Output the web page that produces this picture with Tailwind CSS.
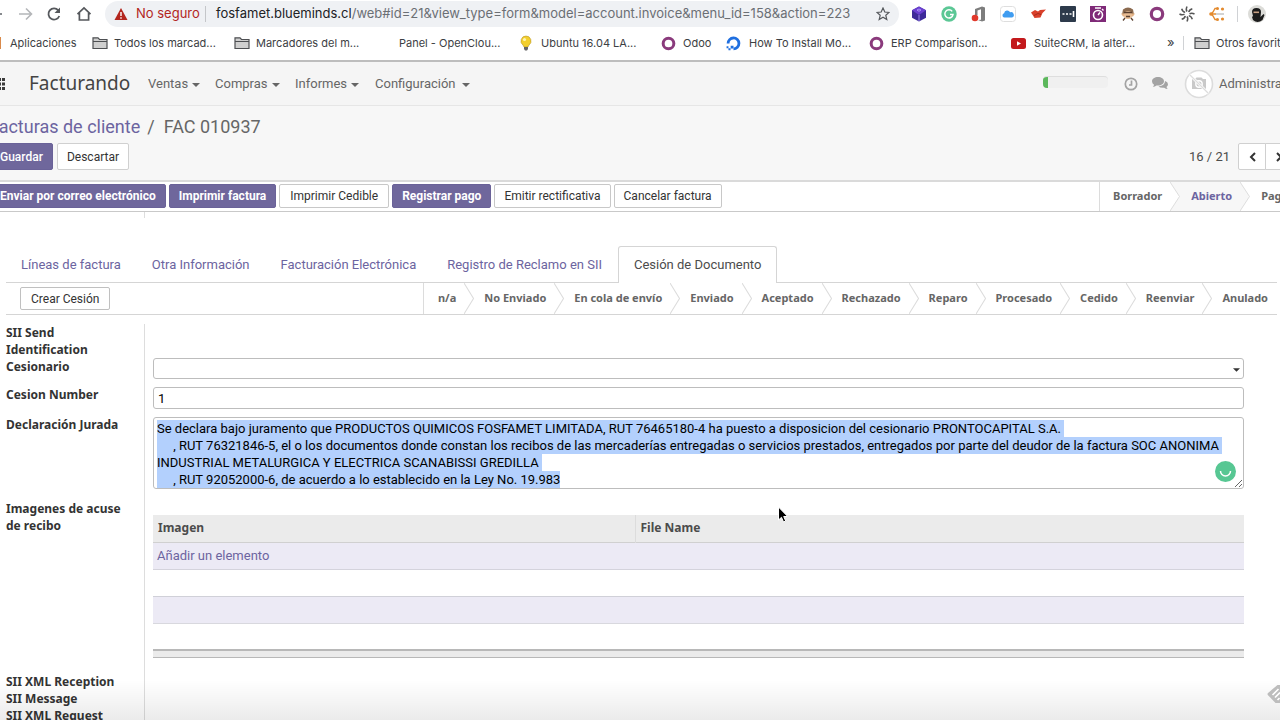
<!doctype html>
<html lang="es">
<head>
  <meta charset="utf-8">
  <meta name="viewport" content="width=device-width, initial-scale=1">
  <title>FAC 010937 - Facturando</title>
  <script src="https://cdn.jsdelivr.net/npm/@tailwindcss/browser@4"></script>
</head>

<body class="relative h-screen overflow-hidden bg-white font-['Roboto','Noto_Sans',sans-serif] text-[13px] text-[#4c4c4c]">
  <svg class="hidden">
    <symbol id="folder" viewBox="0 0 16 14">
      <path d="M1 12.5V1.8h5l1.5 1.700H15v9z" fill="#cfcfcf" stroke="#4d4f52" stroke-width="1.200"/>
      <path d="M1 5.500h14" stroke="#4d4f52" stroke-width="1"/>
    </symbol>
    <symbol id="ring" viewBox="0 0 16 16">
      <circle cx="8" cy="8" r="5.700" fill="none" stroke="#8a3a7c" stroke-width="3.200"/>
    </symbol>
    <symbol id="caret" viewBox="0 0 8 4">
      <path d="M0 0h8L4 4z" fill="#666"/>
    </symbol>
    <symbol id="chevron" viewBox="0 0 10 30" preserveAspectRatio="none">
      <path d="M0 0l9.500 15L0 30" fill="none" stroke="#dcdcdc"/>
    </symbol>
  </svg>

  <!-- browser toolbar -->
  <div class="flex h-7 items-center text-[#5f6368] font-['Inter',sans-serif]">
    <div class="flex w-[105px] shrink-0 items-center">
      <svg class="h-4 w-[18px]" viewBox="0 0 18 16"><path d="M0 8h2" stroke="#5f6368" stroke-width="1.600"/></svg>
      <svg class="size-4" viewBox="0 0 16 16" fill="none" stroke="#b4b6b9" stroke-width="1.600"><path d="M1 8h12M8 2.500L13.500 8 8 13.500"/></svg>
      <svg class="ml-3 size-4" viewBox="0 0 16 16" fill="none" stroke="#55585c" stroke-width="1.800"><path d="M13.300 10A5.600 5.600 0 1 1 12.300 4.300"/><path d="M14 1.500V7H8.500z" fill="#55585c" stroke="none"/></svg>
      <svg class="ml-[14px] size-4" viewBox="0 0 16 16" fill="none" stroke="#55585c" stroke-width="1.700"><path d="M1.500 8.200L8 2l6.500 6.200M3.400 7v7h9.200V7"/></svg>
    </div>
    <div class="flex h-[26px] flex-1 items-center rounded-full bg-[#eff1f4] px-[9px] text-[13px]">
      <svg class="size-[14px]" viewBox="0 0 14 14"><path d="M7 1l6.500 12H.5z" fill="#b3261e"/><path d="M7 5v4M7 10.200v1.500" stroke="#fff" stroke-width="1.400"/></svg>
      <span class="ml-2 w-[69px] whitespace-nowrap text-[#b3261e]">No seguro</span>
      <span class="mr-[10px] h-4 w-px bg-[#c4c6c9]"></span>
      <span class="flex-1 whitespace-nowrap text-[#6b6f74]"><span class="text-[#202124]">fosfamet.blueminds.cl</span>/web#id=21&amp;view_type=form&amp;model=account.invoice&amp;menu_id=158&amp;action=223</span>
      <svg class="size-[14px]" viewBox="0 0 14 14" fill="none" stroke="#55585c" stroke-width="1.200"><path d="M7 1l1.800 4 4.200.4-3.200 2.900 1 4.300L7 10.300l-3.800 2.300 1-4.300L1 5.400 5.200 5z"/></svg>
    </div>
    <div class="ml-3 flex w-[314px] shrink-0 items-center justify-between">
      <svg class="size-4" viewBox="0 0 16 16"><path d="M8 .5l7 3.800v7.400l-7 3.800-7-3.800V4.300z" fill="#3d2a99"/><path d="M8 .5l7 3.800L8 9 1 4.300z" fill="#6a3fd0"/><path d="M6 4l2-1 2 1-2 1.300zM8 9v6.500" stroke="#b9a4ff" fill="none" stroke-width=".8"/></svg>
      <svg class="size-4" viewBox="0 0 16 16"><circle cx="8" cy="8" r="7.700" fill="#5bc795"/><path d="M11.200 5.400A4.100 4.100 0 1 0 12 8.600H9" fill="none" stroke="#fff" stroke-width="1.500"/></svg>
      <svg class="size-4" viewBox="0 0 16 16"><path d="M4 3L11 .5l3 1v13l-3 1-4-1.500 3-.3V3.200L6.500 4.500V9L4 10z" fill="#7d7d7d"/><circle cx="4" cy="12" r="3.300" fill="#e0382b"/></svg>
      <svg class="size-4" viewBox="0 0 16 16"><rect x=".5" y=".5" width="15" height="15" rx="3" fill="#fff" stroke="#dedede"/><path d="M4.300 11.500a2.200 2.200 0 0 1-.2-4.300 3.200 3.200 0 0 1 6-.9 2.700 2.700 0 0 1 1.900 5.200z" fill="#3f9cf0"/></svg>
      <svg class="size-4" viewBox="0 0 16 16"><path d="M1 6.500L5 4l3 1.500L10 4l6-.5-3.500 3.500-2 4.500-6 .5L3 9.500z" fill="#d9402a"/><path d="M4 9.500l4-2 3 1" stroke="#a52a1a" fill="none"/></svg>
      <svg class="size-4" viewBox="0 0 16 16"><rect width="16" height="16" rx="1" fill="#2d3a4b"/><path d="M2.500 8h2M6 8h2M9.500 8h2M13.500 5v6" stroke="#fff" stroke-width="1.600"/></svg>
      <svg class="size-4" viewBox="0 0 16 16"><rect width="16" height="16" fill="#7f2a78"/><circle cx="8" cy="9" r="4.500" fill="none" stroke="#fff" stroke-width="1.600"/><path d="M5 2h6M8 9l2-2.500M12 3l1.500 1.500" stroke="#fff" stroke-width="1.400"/></svg>
      <svg class="size-4" viewBox="0 0 16 16"><path d="M3 3.500Q8-.5 13 3.500l1 5H2z" fill="#8b6a4f"/><path d="M1 7.500h14l-2 3H3z" fill="#e2b184"/><circle cx="8" cy="9" r="4" fill="#e8bd94"/><path d="M4 6.500h8M6 10.500h4M3 14.500l2-2.500M13 14.500L11 12" stroke="#5a4030" stroke-width="1.300"/></svg>
      <svg class="size-4"><use href="#ring"/></svg>
      <svg class="size-4" viewBox="0 0 16 16" stroke="#555" stroke-width="1.500" fill="none"><path d="M8 .5q-1.500 3 0 5M13.300 2.700q-3.200 1-3.500 3.500M15.500 8q-3-1.500-5 0M13.300 13.300q-1-3.200-3.500-3.500M8 15.500q1.500-3 0-5M2.700 13.300q3.200-1 3.500-3.500M.5 8q3 1.500 5 0M2.700 2.700q1 3.200 3.500 3.500"/></svg>
      <svg class="size-4" viewBox="0 0 16 16"><path d="M8 2.500H6L4 6 2 8l2 2 2 3.500h2M2 8h5" fill="none" stroke="#e38a2e" stroke-width="1.300"/><path d="M7 8h8" stroke="#bbb" stroke-width="1.300"/><g fill="#e38a2e"><circle cx="8.500" cy="2.500" r="1.500"/><circle cx="13.500" cy="3" r="1.600"/><circle cx="2" cy="8" r="1.800"/><circle cx="8.500" cy="13.500" r="1.500"/><circle cx="13.500" cy="13" r="1.600"/></g></svg>
    </div>
    <span class="ml-3 h-4 w-px shrink-0 bg-[#d0d2d5]"></span>
    <svg class="mr-[14px] ml-[10px] size-[18px] shrink-0" viewBox="0 0 18 18"><circle cx="9" cy="9" r="9" fill="#dcdcd8"/><path d="M4 7q0-4 4.500-4T13 7l-.5 5 3-3 1 1-2 5q-5 4-9.500 0l-1-3 1-1z" fill="#1c1c1c"/><path d="M5.500 6.500h5.500v1.600H5.500z" fill="#c9a184"/></svg>
  </div>

  <!-- bookmarks -->
  <div class="flex h-8 items-center pb-[2px] whitespace-nowrap text-[11px] text-[#3c4043] font-['Inter',sans-serif]">
    <a href="#" class="flex w-[92px] shrink-0 items-center gap-[9px]"><span class="h-3 w-px bg-[#d98a4b]"></span>Aplicaciones</a>
    <a href="#" class="flex w-[142px] shrink-0 items-center gap-[6px]"><svg class="h-[14px] w-4"><use href="#folder"/></svg>Todos los marcad...</a>
    <a href="#" class="flex w-[142px] shrink-0 items-center gap-[6px]"><svg class="h-[14px] w-4"><use href="#folder"/></svg>Marcadores del m...</a>
    <a href="#" class="flex w-[142px] shrink-0 items-center pl-[23px]">Panel - OpenClou...</a>
    <a href="#" class="flex w-[143px] shrink-0 items-center gap-[7px]"><svg class="size-4" viewBox="0 0 16 16"><path d="M8 1a5 5 0 0 1 3 9l-1 2H6l-1-2a5 5 0 0 1 3-9z" fill="#f3cf2c" stroke="#b9952a" stroke-width=".6"/><circle cx="6.500" cy="4.500" r="1.600" fill="#fdf3b4"/><path d="M6 12h4v2l-1 1.500H7L6 14z" fill="#666"/></svg>Ubuntu 16.04 LA...</a>
    <a href="#" class="flex w-[65px] shrink-0 items-center gap-[7px]"><svg class="size-[15px]" viewBox="0 0 16 16"><use href="#ring"/></svg>Odoo</a>
    <a href="#" class="flex w-[143px] shrink-0 items-center gap-2"><svg class="size-[15px]" viewBox="0 0 16 16"><path d="M8 13.700A5.800 5.800 0 1 0 2.200 8" fill="none" stroke="#1f6fe0" stroke-width="3"/><path d="M5 10.300h3v3H5zM2.600 13h2.200v2.200H2.600zM.6 11h2v2h-2z" fill="#1f6fe0"/></svg>How To Install Mo...</a>
    <a href="#" class="flex w-[142px] shrink-0 items-center gap-[7px]"><svg class="size-[15px]" viewBox="0 0 16 16"><use href="#ring"/></svg>ERP Comparison...</a>
    <a href="#" class="flex w-[142px] shrink-0 items-center gap-2"><svg class="h-[11px] w-[15px]" viewBox="0 0 15 11"><rect width="15" height="11" rx="2.500" fill="#c3191c"/><path d="M6 3.200v4.600L10 5.500z" fill="#fff"/></svg>SuiteCRM, la alter...</a>
    <button class="ml-[14px] w-4 shrink-0 text-left text-[13px]">»</button>
    <span class="h-[14px] w-px shrink-0 bg-[#d0d2d5]"></span>
    <a href="#" class="ml-[10px] flex shrink-0 items-center gap-[6px]"><svg class="h-[14px] w-4"><use href="#folder"/></svg>Otros favoritos</a>
  </div>

  <!-- main menu -->
  <nav class="flex h-[46px] items-center border-t-2 border-b border-t-[#bdbdbd] border-b-[#e6e6e6] bg-[#f5f5f5] whitespace-nowrap text-[#666]">
    <button class="w-[29px] shrink-0" aria-label="Aplicaciones"><svg class="h-[14px] w-[6px]" viewBox="0 0 6 14" fill="#3a3a3a"><path d="M0 1h1v3H0zM2 1h3v3H2zM0 5.500h1v3H0zM2 5.500h3v3H2zM0 10h1v3H0zM2 10h3v3H2z"/></svg></button>
    <a href="#" class="w-[119px] font-['Noto_Sans',sans-serif] text-[19px] text-[#444]">Facturando</a>
    <a href="#" class="flex w-[67px] items-center gap-1">Ventas<svg class="mt-[2px] h-1 w-2"><use href="#caret"/></svg></a>
    <a href="#" class="flex w-[80px] items-center gap-1">Compras<svg class="mt-[2px] h-1 w-2"><use href="#caret"/></svg></a>
    <a href="#" class="flex w-[80px] items-center gap-1">Informes<svg class="mt-[2px] h-1 w-2"><use href="#caret"/></svg></a>
    <a href="#" class="flex flex-1 items-center gap-[6px]">Configuración<svg class="mt-[2px] h-1 w-2"><use href="#caret"/></svg></a>
    <div class="mb-[3px] h-3 w-[65px] shrink-0 overflow-hidden rounded-sm border-t border-[#dedede] bg-[#f0f0f0]"><div class="h-3 w-[5px] bg-[#5cb85c]"></div></div>
    <svg class="ml-4 size-[14px] shrink-0" viewBox="0 0 14 14" fill="none" stroke="#a3a3a3" stroke-width="1.700"><circle cx="7" cy="7" r="5.700"/><path d="M7.500 3.500V8H5"/></svg>
    <svg class="ml-[14px] h-[13px] w-4 shrink-0" viewBox="0 0 16 13" fill="#a3a3a3"><path d="M6 0c3.300 0 6 1.800 6 4.200S9.300 8.500 6 8.500l-1.500-.1Q3 9.800.8 9.900q1-.9 1.200-2.200Q0 6.300 0 4.200C0 1.800 2.700 0 6 0z"/><path d="M13 4q3 1 3 3.200 0 1.700-1.500 2.800.3 1.200 1.200 2.100-2 0-3.500-1.400Q8 11 6.500 9.400 13 8.800 13 4z"/></svg>
    <svg class="ml-4 size-[30px] shrink-0" viewBox="0 0 30 30"><circle cx="15" cy="15" r="13.500" fill="#fff" stroke="#dcdcdc" stroke-width="1.600"/><path d="M8 10h3l1.500-1.500h5L19 10h3v10H8z" fill="#c9c9c9"/><circle cx="15" cy="15" r="3.200" fill="#c9c9c9" stroke="#fff" stroke-width="1.400"/><path d="M5.500 5.500l19 19" stroke="#fff" stroke-width="2.500"/><path d="M5.500 5.500l19 19" stroke="#dcdcdc" stroke-width="1.200"/></svg>
    <a href="#" class="ml-[5px] w-[61px] shrink-0">Administrator</a>
  </nav>

  <!-- breadcrumb and pager -->
  <div class="flex h-[76px] flex-col border-b-2 border-[#dadada] bg-[#f7f7f7]">
    <div class="-ml-[11px] flex h-[37px] items-center pt-1 text-[18px] whitespace-nowrap text-[#666]">
      <a href="#" class="text-[#6c64a0]">Facturas de cliente</a><span class="mx-[7px]">/</span><span class="ml-[2px]">FAC 010937</span>
    </div>
    <div class="flex items-center justify-between text-[12px]">
      <div class="-ml-[10px] flex gap-1">
        <button class="h-[27px] rounded-[2px] border border-[#6a6298] bg-[#6f679c] px-[9px] font-medium text-white">Guardar</button>
        <button class="h-[27px] rounded-[2px] border border-[#d0d0d0] bg-white px-[9px] text-[#333]">Descartar</button>
      </div>
      <div class="-mr-[13px] flex items-center">
        <span class="mr-[8px] text-[13px] text-[#4c4c4c]">16 / 21</span>
        <button class="flex h-[27px] w-7 items-center justify-center rounded-l-[2px] border border-[#d0d0d0] bg-white" aria-label="Anterior"><svg class="h-[10px] w-[7px]" viewBox="0 0 7 10"><path d="M6 1L2 5l4 4" fill="none" stroke="#333" stroke-width="2"/></svg></button>
        <button class="-ml-px flex h-[27px] w-7 items-center justify-center rounded-r-[2px] border border-[#d0d0d0] bg-white" aria-label="Siguiente"><svg class="h-[10px] w-[7px]" viewBox="0 0 7 10"><path d="M1 1l4 4-4 4" fill="none" stroke="#333" stroke-width="2"/></svg></button>
      </div>
    </div>
  </div>

  <!-- invoice actions and state -->
  <div class="flex h-[30px] items-stretch justify-between border-b border-[#c9c9c9] text-[12px] whitespace-nowrap">
    <div class="-ml-[10px] flex gap-[3px] py-[2px]">
      <button class="h-6 rounded-[2px] border border-[#6a6298] bg-[#6f679c] px-[9px] font-bold text-white">Enviar por correo electrónico</button>
      <button class="h-6 rounded-[2px] border border-[#6a6298] bg-[#6f679c] px-[9px] font-bold text-white">Imprimir factura</button>
      <button class="h-6 rounded-[2px] border border-[#c8c8c8] bg-white px-[10px] text-[#333]">Imprimir Cedible</button>
      <button class="h-6 rounded-[2px] border border-[#6a6298] bg-[#6f679c] px-[9px] font-bold text-white">Registrar pago</button>
      <button class="h-6 rounded-[2px] border border-[#c8c8c8] bg-white px-[9px] text-[#333]">Emitir rectificativa</button>
      <button class="h-6 rounded-[2px] border border-[#c8c8c8] bg-white px-[9px] text-[#333]">Cancelar factura</button>
    </div>
    <div class="-mr-[30px] flex items-center border-l border-[#dcdcdc] pl-[13px] font-['Noto_Sans',sans-serif] text-[11px] font-bold text-[#666]">
      <span>Borrador</span>
      <svg class="ml-2 h-[29px] w-[10px]" viewBox="0 0 10 30" preserveAspectRatio="none"><path d="M0 0h10v30H0l9.500-15z" fill="#f7f7f7"/><path d="M0 0l9.500 15L0 30" fill="none" stroke="#dcdcdc"/></svg>
      <span class="flex h-full items-center bg-[#f7f7f7] pr-2 pl-[11px] text-[#6c64a0]">Abierto</span>
      <svg class="h-[29px] w-[10px]" viewBox="0 0 10 30" preserveAspectRatio="none"><path d="M0 0l9.500 15L0 30" fill="#f7f7f7" stroke="#dcdcdc"/></svg>
      <span class="pr-2 pl-[11px]">Pagado</span>
    </div>
  </div>

  <div class="ml-[144px] h-[6px] w-px bg-[#ddd]"></div>

  <main>
    <!-- notebook tabs -->
    <div class="mr-[3px] ml-[6px] flex h-[65px] items-end gap-px border-b border-[#d5d5d5] text-[#6c64a0]">
      <a href="#" class="flex h-[35px] items-center px-[15px]">Líneas de factura</a>
      <a href="#" class="flex h-[35px] items-center px-[15px]">Otra Información</a>
      <a href="#" class="flex h-[35px] items-center px-[15px]">Facturación Electrónica</a>
      <a href="#" class="flex h-[35px] items-center px-[15px]">Registro de Reclamo en SII</a>
      <a href="#" class="-mb-px flex h-[37px] items-center rounded-t-[3px] border border-b-0 border-[#d5d5d5] bg-white px-[15px] text-[#4c4c4c]">Cesión de Documento</a>
    </div>

    <div class="mr-[3px] ml-[6px] flex h-8 items-center justify-between border-b border-[#d5d5d5] whitespace-nowrap">
      <button class="ml-[14px] h-[23px] rounded-[2px] border border-[#c0c0c0] bg-white px-[10px] text-[12px] text-[#333]">Crear Cesión</button>
      <div class="flex h-full items-center border-l border-[#dcdcdc] pr-[9px] pl-[14px] font-['Noto_Sans',sans-serif] text-[11px] font-bold text-[#666]">
        <span>n/a</span><svg class="mr-[10px] ml-2 h-[31px] w-[10px]"><use href="#chevron"/></svg>
        <span>No Enviado</span><svg class="mr-[10px] ml-2 h-[31px] w-[10px]"><use href="#chevron"/></svg>
        <span>En cola de envío</span><svg class="mr-[10px] ml-2 h-[31px] w-[10px]"><use href="#chevron"/></svg>
        <span>Enviado</span><svg class="mr-[10px] ml-2 h-[31px] w-[10px]"><use href="#chevron"/></svg>
        <span>Aceptado</span><svg class="mr-[10px] ml-2 h-[31px] w-[10px]"><use href="#chevron"/></svg>
        <span>Rechazado</span><svg class="mr-[10px] ml-2 h-[31px] w-[10px]"><use href="#chevron"/></svg>
        <span>Reparo</span><svg class="mr-[10px] ml-2 h-[31px] w-[10px]"><use href="#chevron"/></svg>
        <span>Procesado</span><svg class="mr-[10px] ml-2 h-[31px] w-[10px]"><use href="#chevron"/></svg>
        <span>Cedido</span><svg class="mr-[10px] ml-2 h-[31px] w-[10px]"><use href="#chevron"/></svg>
        <span>Reenviar</span><svg class="mr-[10px] ml-2 h-[31px] w-[10px]"><use href="#chevron"/></svg>
        <span>Anulado</span>
      </div>
    </div>

    <!-- form fields -->
    <div class="mt-[9px] mr-9 ml-[6px] flex flex-col">
      <div class="flex">
        <div class="w-[139px] shrink-0 border-r border-[#ddd] pr-10 font-['Noto_Sans',sans-serif] text-[12px] leading-[17px] font-bold text-[#333]">SII Send Identification</div>
      </div>
      <div class="flex h-7">
        <label for="cesionario" class="w-[139px] shrink-0 border-r border-[#ddd] font-['Noto_Sans',sans-serif] text-[12px] leading-[17px] font-bold text-[#333]">Cesionario</label>
        <div class="relative ml-2 flex-1">
          <select id="cesionario" class="block h-[21px] w-full appearance-none rounded-[3px] border border-[#bdbdbd] bg-white px-1"><option></option></select>
          <svg class="pointer-events-none absolute top-[10px] right-1 h-1 w-[7px]" viewBox="0 0 8 4"><path d="M0 0h8L4 4z" fill="#333"/></svg>
        </div>
      </div>
      <div class="flex h-[30px]">
        <label for="numero" class="w-[139px] shrink-0 border-r border-[#ddd] font-['Noto_Sans',sans-serif] text-[12px] leading-[17px] font-bold text-[#333]">Cesion Number</label>
        <div class="ml-2 flex-1 pt-px">
          <input id="numero" type="text" value="1" class="block h-[22px] w-full rounded-[3px] border border-[#bdbdbd] px-1 text-black">
        </div>
      </div>
      <div class="flex h-[84px]">
        <label for="declaracion" class="w-[139px] shrink-0 border-r border-[#ddd] font-['Noto_Sans',sans-serif] text-[12px] leading-[17px] font-bold text-[#333]">Declaración Jurada</label>
        <div class="relative ml-2 flex-1 pt-px">
          <textarea id="declaracion" spellcheck="false" class="block h-[72px] w-full overflow-hidden rounded-[3px] border border-[#bdbdbd] px-[3px] py-[2px] leading-[17px] text-black outline-none selection:bg-[#b3d0fd] selection:text-black">Se declara bajo juramento que PRODUCTOS QUIMICOS FOSFAMET LIMITADA, RUT 76465180-4 ha puesto a disposicion del cesionario PRONTOCAPITAL S.A.
     , RUT 76321846-5, el o los documentos donde constan los recibos de las mercaderías entregadas o servicios prestados, entregados por parte del deudor de la factura SOC ANONIMA
INDUSTRIAL METALURGICA Y ELECTRICA SCANABISSI GREDILLA
     , RUT 92052000-6, de acuerdo a lo establecido en la Ley No. 19.983</textarea>
          <svg class="absolute right-2 bottom-[18px] size-[21px]" viewBox="0 0 21 21"><circle cx="10.500" cy="10.500" r="10.500" fill="#57c793"/><path d="M5.500 10a5 5 0 0 0 10 0" fill="none" stroke="#fff" stroke-width="1.500"/></svg>
        </div>
      </div>
      <div class="flex h-[173px]">
        <div class="w-[139px] shrink-0 border-r border-[#ddd] pr-4 font-['Noto_Sans',sans-serif] text-[12px] leading-[17px] font-bold text-[#333]">Imagenes de acuse de recibo</div>
        <div class="ml-2 flex-1 pt-[15px]">
          <table class="w-full table-fixed border-collapse text-left">
            <thead class="bg-[#ebebeb] font-['Noto_Sans',sans-serif] text-[12px] text-[#4c4c4c]">
              <tr class="h-[27px] border-b border-[#d0d0d0]">
                <th class="w-[482px] border-r border-[#dcdcdc] px-[5px] font-bold">Imagen</th>
                <th class="px-[5px] font-bold">File Name</th>
              </tr>
            </thead>
            <tbody>
              <tr class="h-[27px] border-b border-[#d4d3dc] bg-[#eceaf5]"><td colspan="2" class="px-1"><a href="#" class="text-[#6c64a0]">Añadir un elemento</a></td></tr>
              <tr class="h-[27px] border-b border-[#d0d0d8]"><td colspan="2"></td></tr>
              <tr class="h-[27px] border-b border-[#d8d8de] bg-[#eceaf5]"><td colspan="2"></td></tr>
              <tr class="h-[27px]"><td colspan="2"></td></tr>
            </tbody>
            <tfoot>
              <tr class="h-[7px] border-t-2 border-b border-[#b8b8b8] bg-[#ebebeb]"><td colspan="2"></td></tr>
            </tfoot>
          </table>
        </div>
      </div>
      <div class="w-[139px] border-r border-[#ddd] font-['Noto_Sans',sans-serif] text-[12px] leading-[17px] font-bold text-[#333]">
        <div>SII XML Reception</div>
        <div>SII Message</div>
        <div>SII XML Request</div>
      </div>
    </div>
  </main>

  <div class="pointer-events-none absolute inset-x-0 bottom-0 h-10 bg-linear-to-b from-transparent to-black/8"></div>
  <svg class="absolute right-0 bottom-4 h-5 w-[13px]" viewBox="0 0 13 20"><path d="M13 1L10.500 1 1 9q-1 1.200 0 2.200L8.500 19H13z" fill="#bdbdbd"/><path d="M5.500 11l6-6M8 13.500L13 8.500M10.500 16l2-2" stroke="#fff" stroke-width="1.700"/></svg>
  <svg class="absolute top-[506px] left-[777px] h-[18px] w-3" viewBox="0 0 12 18"><path d="M1.500 1v13l3-2.700 2 4.700 2.200-1-2-4.500h4z" fill="#000" stroke="#fff" stroke-width="1"/></svg>

  <script>
    const field = document.querySelector('#declaracion');

    field.focus({ preventScroll: true });
    field.select();
  </script>
</body>
</html>
